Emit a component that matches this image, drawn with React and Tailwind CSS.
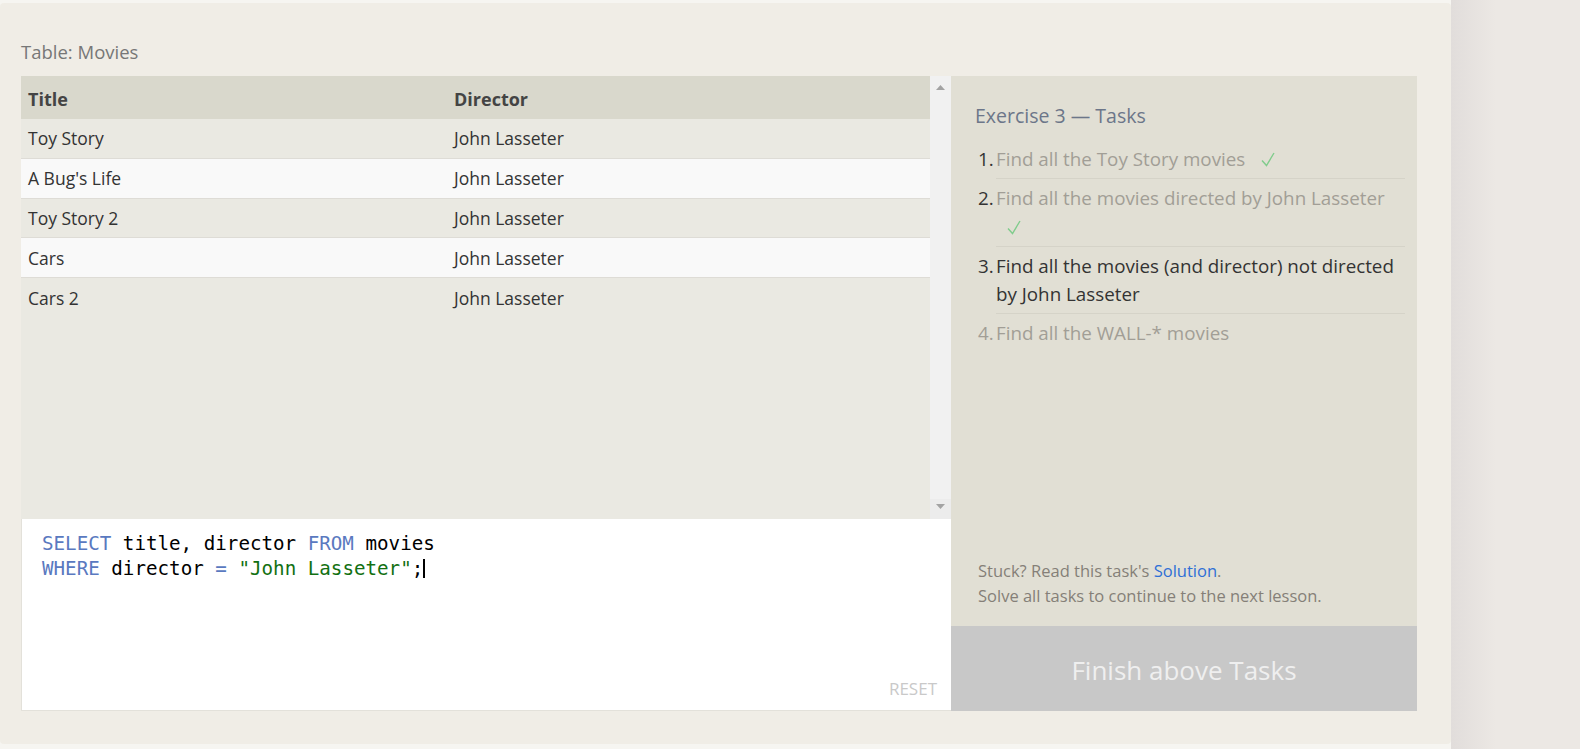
import React from 'react';

const movies = [
  { title: 'Toy Story', director: 'John Lasseter' },
  { title: "A Bug's Life", director: 'John Lasseter' },
  { title: 'Toy Story 2', director: 'John Lasseter' },
  { title: 'Cars', director: 'John Lasseter' },
  { title: 'Cars 2', director: 'John Lasseter' },
];

const tasks = [
  { n: 1, text: 'Find all the Toy Story movies', state: 'done' },
  { n: 2, text: 'Find all the movies directed by John Lasseter', state: 'done' },
  { n: 3, text: 'Find all the movies (and director) not directed by John Lasseter', state: 'current' },
  { n: 4, text: 'Find all the WALL-* movies', state: 'todo' },
];

function Check() {
  return (
    <svg className="ml-[11px] inline-block align-[-1px]" width="14" height="15" viewBox="0 0 14 15">
      <path d="M1 8.5L5.5 13.5L13 1" fill="none" stroke="#80cc8c" strokeWidth="1.4" />
    </svg>
  );
}

function MoviesTable() {
  return (
    <div className="flex h-[443px]">
      <div className="w-[909px] bg-[#eae9e2] text-[17.5px] text-[#333]">
        <div className="flex h-[43px] items-center bg-[#d9d8cc] pt-[3px] text-[18px] font-bold text-[#444]">
          <div className="w-[426px] pl-[7px]">Title</div>
          <div className="pl-[7px]">Director</div>
        </div>
        {movies.map((m, i) => (
          <div
            key={m.title}
            className={`flex h-[39.8px] items-center ${i < movies.length - 1 ? 'border-b border-[#dedcd6]' : ''} ${i % 2 === 1 ? 'bg-[#f9f9f9]' : 'bg-[#eae9e2]'}`}
          >
            <div className="w-[426px] pl-[7px]">{m.title}</div>
            <div className="pl-[7px]">{m.director}</div>
          </div>
        ))}
      </div>
      <div className="flex w-[21px] flex-col justify-between bg-[#f1f1f1]">
        <div className="flex h-[20px] items-end justify-center pb-[6px]">
          <svg width="9" height="5" viewBox="0 0 9 5"><path d="M4.5 0L9 5H0z" fill="#a3a3a3" /></svg>
        </div>
        <div className="flex h-[20px] items-start justify-center bg-[#ececec] pt-[5px]">
          <svg width="9" height="5" viewBox="0 0 9 5"><path d="M0 0H9L4.5 5z" fill="#a3a3a3" /></svg>
        </div>
      </div>
    </div>
  );
}

function Editor() {
  return (
    <div className="flex h-[192px] flex-col border-b border-l border-[#e3e1da] bg-white">
      <pre className="pl-[20px] pt-[13px] font-['DejaVu_Sans_Mono',monospace] text-[19.2px] leading-[24px] text-black">
        <span className="text-[#5a79c0]">SELECT</span> title, director <span className="text-[#5a79c0]">FROM</span> movies{'\n'}
        <span className="text-[#5a79c0]">WHERE</span> director <span className="text-[#5a79c0]">=</span>{' '}
        <span className="text-[#127012]">"John Lasseter"</span>;<span className="inline-block h-[19px] w-[2px] translate-y-[3px] bg-black align-baseline" />
      </pre>
      <div className="mt-auto self-end pb-[11px] pr-[14px] text-[17px] leading-[20px] text-[#c9c9c9]">RESET</div>
    </div>
  );
}

function TaskPanel() {
  return (
    <div className="flex w-[466px] flex-col">
      <div className="flex flex-1 flex-col bg-[#e1dfd4] pl-[24px] pr-[12px] pt-[26px]">
        <h3 className="mb-[10px] text-[19.5px] leading-[28px] text-[#6c7689]">Exercise 3 — Tasks</h3>
        <ol className="ml-[3px] text-[18.8px] leading-[28.5px]">
          {tasks.map((t, i) => (
            <li key={t.n} className={`flex ${t.state === 'todo' ? 'text-[#a19e96]' : 'text-[#333]'}`}>
              <span className="w-[18px] shrink-0 pt-[5px]">{t.n}.</span>
              <div
                className={`flex-1 pb-[4.5px] pt-[5px] ${i < tasks.length - 1 ? 'border-b border-[#d5d3c8]' : ''} ${t.state === 'done' ? 'text-[#a19e96]' : ''}`}
              >
                {t.text}
                {t.state === 'done' && <> <Check /></>}
              </div>
            </li>
          ))}
        </ol>
        <div className="mt-auto pb-[18px] pl-[3px] text-[16.5px] leading-[25px] text-[#857f78]">
          <p>
            Stuck? Read this task's <a className="text-[#2f6fd6]">Solution</a>.
          </p>
          <p>Solve all tasks to continue to the next lesson.</p>
        </div>
      </div>
      <div className="flex h-[85px] items-center justify-center bg-[#c8c8c8] pt-[3px] text-[26px] text-[#efefef]">
        Finish above Tasks
      </div>
    </div>
  );
}

export default function App() {
  return (
    <div className="flex h-[749px] w-[1580px] overflow-hidden bg-[#ece8e4] font-['Open_Sans',sans-serif]">
      <div className="w-[1451px] shrink-0 bg-[#f6f5f1] pb-[5px] pt-[3px]">
        <div className="flex h-full flex-col rounded-[4px] bg-[#f0ede6] pl-[21px] pt-[37px]">
          <div className="mb-[12px] h-[24px] text-[18.5px] leading-[24px] text-[#777]">Table: Movies</div>
          <div className="flex h-[635px]">
            <div className="flex w-[930px] flex-col">
              <MoviesTable />
              <Editor />
            </div>
            <TaskPanel />
          </div>
        </div>
      </div>
      <div className="flex-1 bg-[linear-gradient(to_right,#e1dddb,#ece8e4_45px)]" />
    </div>
  );
}
